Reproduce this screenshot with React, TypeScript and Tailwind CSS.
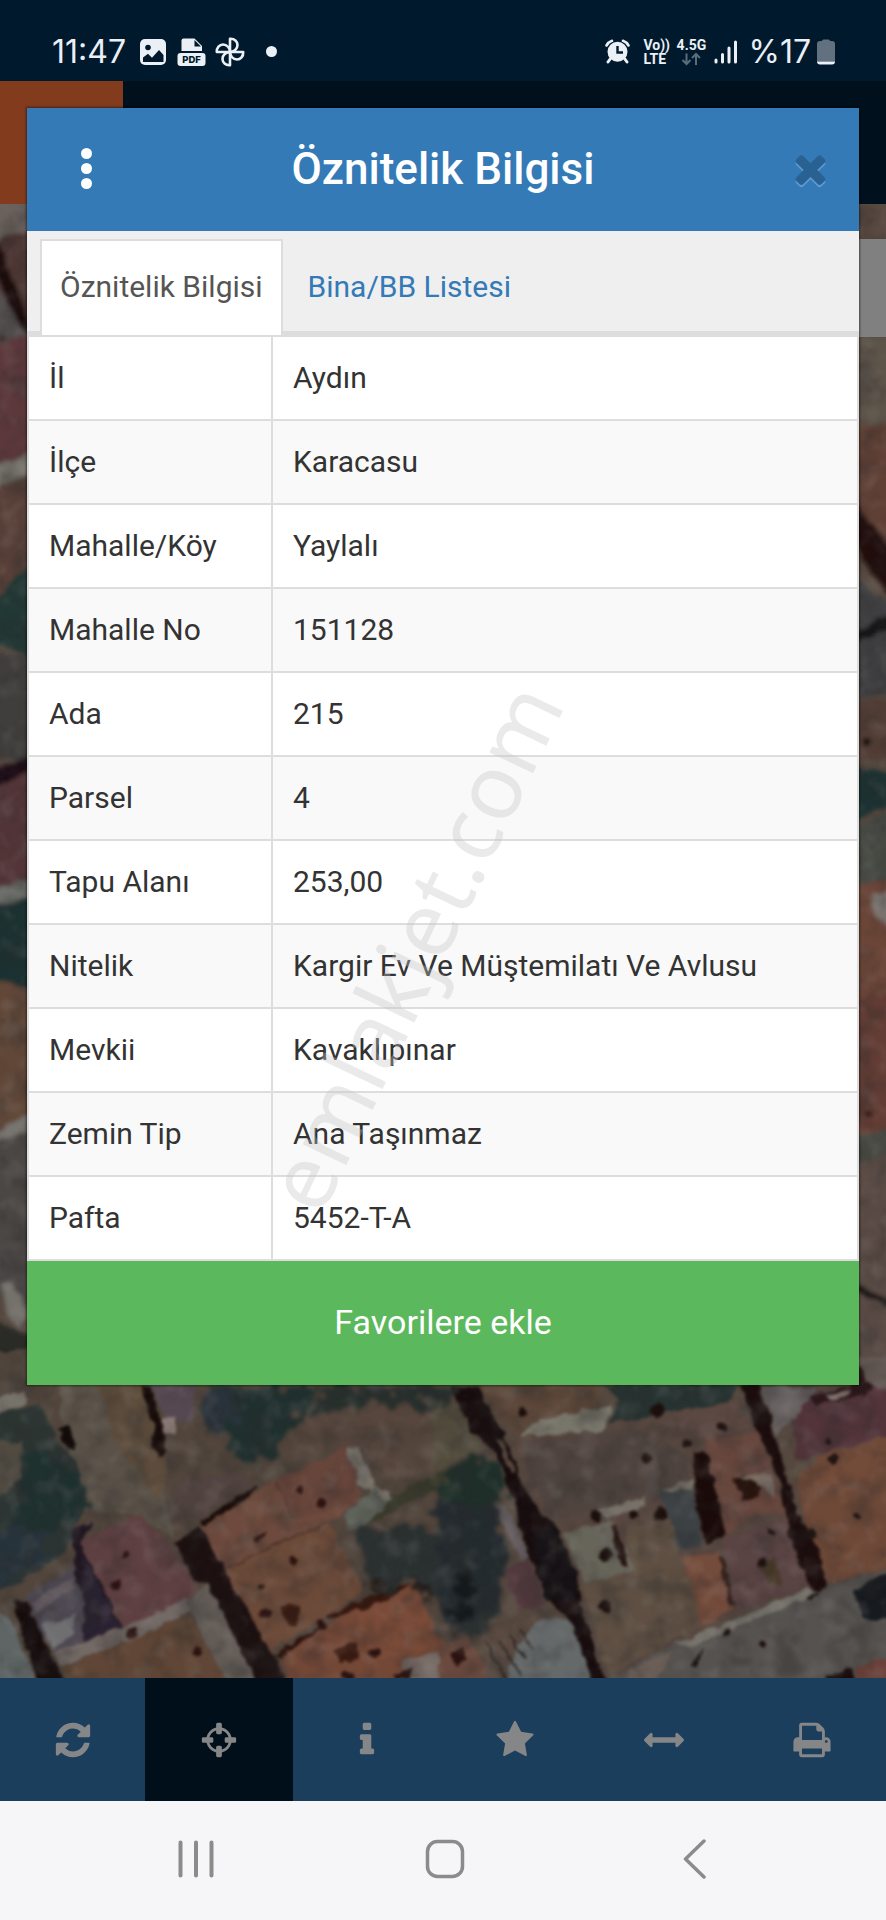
import React from "react";

const attributes: [string, string][] = [
  ["İl", "Aydın"],
  ["İlçe", "Karacasu"],
  ["Mahalle/Köy", "Yaylalı"],
  ["Mahalle No", "151128"],
  ["Ada", "215"],
  ["Parsel", "4"],
  ["Tapu Alanı", "253,00"],
  ["Nitelik", "Kargir Ev Ve Müştemilatı Ve Avlusu"],
  ["Mevkii", "Kavaklıpınar"],
  ["Zemin Tip", "Ana Taşınmaz"],
  ["Pafta", "5452-T-A"],
];

const tools = [
  {
    label: "Yenile",
    path: "M1639 1056q0 5-1 7-64 268-268 434.5t-478 166.5q-146 0-282.5-55t-243.5-157l-129 129q-19 19-45 19t-45-19-19-45v-448q0-26 19-45t45-19h448q26 0 45 19t19 45-19 45l-137 137q71 66 161 102t187 36q134 0 250-65t186-179q11-17 53-117 8-23 30-23h192q13 0 22.5 9.5t9.5 22.5zm25-800v448q0 26-19 45t-45 19h-448q-26 0-45-19t-19-45 19-45l138-138q-148-137-349-137-134 0-250 65t-186 179q-11 17-53 117-8 23-30 23h-199q-13 0-22.5-9.5t-9.5-22.5v-7q65-268 270-434.5t480-166.5q146 0 284 55.5t245 156.5l130-129q19-19 45-19t45 19 19 45z",
  },
  {
    label: "Konum",
    active: true,
    path: "M1325 1024h-109q-26 0-45-19t-19-45v-128q0-26 19-45t45-19h109q-32-108-112.5-188.5t-188.5-112.5v109q0 26-19 45t-45 19h-128q-26 0-45-19t-19-45v-109q-108 32-188.5 112.5t-112.5 188.5h109q26 0 45 19t19 45v128q0 26-19 45t-45 19h-109q32 108 112.5 188.5t188.5 112.5v-109q0-26 19-45t45-19h128q26 0 45 19t19 45v109q108-32 188.5-112.5t112.5-188.5zm339-192v128q0 26-19 45t-45 19h-143q-37 161-154.5 278.5t-278.5 154.5v143q0 26-19 45t-45 19h-128q-26 0-45-19t-19-45v-143q-161-37-278.5-154.5t-154.5-278.5h-143q-26 0-45-19t-19-45v-128q0-26 19-45t45-19h143q37-161 154.5-278.5t278.5-154.5v-143q0-26 19-45t45-19h128q26 0 45 19t19 45v143q161 37 278.5 154.5t154.5 278.5h143q26 0 45 19t19 45z",
  },
  {
    label: "Bilgi",
    path: "M1216 1344v128q0 26-19 45t-45 19h-512q-26 0-45-19t-19-45v-128q0-26 19-45t45-19h64v-384h-64q-26 0-45-19t-19-45v-128q0-26 19-45t45-19h384q26 0 45 19t19 45v576h64q26 0 45 19t19 45zm-128-1152v192q0 26-19 45t-45 19h-256q-26 0-45-19t-19-45v-192q0-26 19-45t45-19h256q26 0 45 19t19 45z",
  },
  {
    label: "Favoriler",
    path: "M1728 647q0 22-26 48l-363 354 86 500q1 7 1 20 0 21-10.5 35.5t-30.5 14.5q-19 0-40-12l-449-236-449 236q-22 12-40 12-21 0-31.5-14.5t-10.5-35.5q0-6 2-20l86-500-364-354q-25-27-25-48 0-37 56-46l502-73 225-455q19-41 49-41t49 41l225 455 502 73q56 9 56 46z",
  },
  {
    label: "Ölç",
    path: "M1792 896q0 26-19 45l-256 256q-19 19-45 19t-45-19-19-45v-128h-1024v128q0 26-19 45t-45 19-45-19l-256-256q-19-19-19-45t19-45l256-256q19-19 45-19t45 19 19 45v128h1024v-128q0-26 19-45t45-19 45 19l256 256q19 19 19 45z",
  },
  {
    label: "Yazdır",
    path: "M448 1536h896v-256h-896v256zm0-640h896v-384h-160q-40 0-68-28t-28-68v-160h-640v640zm1152 64q0-26-19-45t-45-19-45 19-19 45 19 45 45 19 45-19 19-45zm128 0v416q0 13-9.5 22.5t-22.5 9.5h-224v160q0 40-28 68t-68 28h-960q-40 0-68-28t-28-68v-160h-224q-13 0-22.5-9.5t-9.5-22.5v-416q0-79 56.5-135.5t135.5-56.5h64v-544q0-40 28-68t68-28h672q40 0 88 20t76 48l152 152q28 28 48 76t20 88v256h64q79 0 135.5 56.5t56.5 135.5z",
  },
];

const closePath =
  "M1490 1322q0 40-28 68l-136 136q-28 28-68 28t-68-28l-294-294-294 294q-28 28-68 28t-68-28l-136-136q-28-28-28-68t28-68l294-294-294-294q-28-28-28-68t28-68l136-136q28-28 68-28t68 28l294 294 294-294q28-28 68-28t68 28l136 136q28 28 28 68t-28 68l-294 294 294 294q28 28 28 68z";

function StatusBar() {
  return (
    <div className="flex h-[81px] items-center justify-between bg-[#00192c] pt-[23px] pr-[51px] pb-[1px] pl-[52px] font-['Inter',sans-serif] text-[#eaf0f6]">
      <div className="flex items-center">
        <span className="w-[88px] text-[32px] leading-8">11:47</span>
        <svg className="h-[26px] w-[26px]" viewBox="0 0 26 26">
          <rect width="26" height="26" rx="5" fill="currentColor" />
          <circle cx="8" cy="8.500" r="2.800" fill="#00192c" />
          <path d="M3 23v-4.500l5-3.800 4 4 7-7.700 4.500 5V23z" fill="#00192c" />
        </svg>
        <svg className="ml-[11px] h-[28px] w-[29px]" viewBox="0 0 29 28">
          <path d="M4.500 13V2.500Q4.500 .5 6.500 .5H17.500L25 8V13z" fill="currentColor" />
          <path d="M17.500 2v6.500H24z" fill="#00192c" />
          <rect x=".5" y="15" width="28" height="13" rx="3" fill="currentColor" />
          <text x="14.500" y="25" textAnchor="middle" fontSize="9.500" fontWeight="800" fill="#00192c">PDF</text>
        </svg>
        <svg className="ml-[9px] h-[30px] w-[30px]" viewBox="0 0 30 30" fill="none" stroke="currentColor" strokeWidth="2.600" strokeLinejoin="round">
          <path d="M15 15V1.800C19.500 1.500 22.500 4.500 22.500 8 22.500 12 19 15 15 15Z" />
          <path d="M15 15V1.800C19.500 1.500 22.500 4.500 22.500 8 22.500 12 19 15 15 15Z" transform="rotate(90 15 15)" />
          <path d="M15 15V1.800C19.500 1.500 22.500 4.500 22.500 8 22.500 12 19 15 15 15Z" transform="rotate(180 15 15)" />
          <path d="M15 15V1.800C19.500 1.500 22.500 4.500 22.500 8 22.500 12 19 15 15 15Z" transform="rotate(270 15 15)" />
        </svg>
        <span className="ml-[21px] h-[11px] w-[11px] rounded-full bg-[#eaf0f6]" />
      </div>
      <div className="flex items-center">
        <svg className="h-[25px] w-[25px]" viewBox="0 0 25 25" fill="none">
          <circle cx="12.500" cy="12.800" r="10" fill="currentColor" />
          <path d="M1.500 6.500Q3.500 3 7 1.800M23.500 6.500Q21.500 3 18 1.800" stroke="currentColor" strokeWidth="2.600" strokeLinecap="round" />
          <path d="M5.500 19.500 3 23M19.500 19.500 22 23" stroke="currentColor" strokeWidth="3" strokeLinecap="round" />
          <path d="M12.500 7v6.500H18" stroke="#00192c" strokeWidth="2.400" />
        </svg>
        <span className="ml-[13px] flex w-[33px] flex-col font-['Roboto',sans-serif] text-[14px] leading-[14px] font-bold">
          <span>Vo))</span>
          <span>LTE</span>
        </span>
        <span className="flex w-[30px] flex-col items-center font-['Roboto',sans-serif] text-[14px] leading-[14px] font-bold">
          <span>4.5G</span>
          <svg className="h-[14px] w-[20px]" viewBox="0 0 20 14" fill="none" stroke="#5b6d7c" strokeWidth="2">
            <path d="M5.500 1.500v10M1.500 8l4 4 4-4M15 13V2.500M11 6l4-4 4 4" />
          </svg>
        </span>
        <svg className="ml-[8px] h-[24px] w-[24px]" viewBox="0 0 24 24" stroke="currentColor" strokeWidth="3" strokeLinecap="round">
          <path d="M2 20v2M8.500 14.500V22M15 8v14M21.500 2v20" />
        </svg>
        <span className="ml-[10px] text-[32px] leading-8">%17</span>
        <svg className="ml-[6px] h-[26px] w-[18px]" viewBox="0 0 18 26">
          <path d="M5 2Q5 .5 6.500 .5h5Q13 .5 13 2h2q3 0 3 3v17.500H0V5q0-3 3-3z" fill="#61717f" />
          <path d="M0 22.500h18q0 3-3 3H3q-3 0-3-3z" fill="currentColor" />
        </svg>
      </div>
    </div>
  );
}

function SatelliteMap() {
  return (
    <svg
      className="absolute inset-0 h-full w-full"
      viewBox="0 204 886 1474"
      preserveAspectRatio="xMidYMid slice"
      role="img"
      aria-label="Uydu haritası"
    >
      <defs>
        <filter id="terrain" x="-5%" y="-5%" width="110%" height="110%">
          <feTurbulence type="fractalNoise" baseFrequency="0.07" numOctaves="3" seed="4" result="n" />
          <feDisplacementMap in="SourceGraphic" in2="n" scale="8" xChannelSelector="R" yChannelSelector="G" result="d" />
          <feGaussianBlur in="d" stdDeviation="2" />
        </filter>
        <filter id="blocks" x="-5%" y="-5%" width="110%" height="110%" colorInterpolationFilters="sRGB">
          <feTurbulence type="fractalNoise" baseFrequency="0.025" numOctaves="3" seed="4" result="n" />
          <feDisplacementMap in="SourceGraphic" in2="n" scale="26" xChannelSelector="R" yChannelSelector="G" result="d" />
          <feGaussianBlur in="d" stdDeviation="5" />
        </filter>
        <filter id="leaves" x="-10%" y="-10%" width="120%" height="120%" colorInterpolationFilters="sRGB">
          <feTurbulence type="fractalNoise" baseFrequency="0.02" numOctaves="4" seed="23" result="n" />
          <feDisplacementMap in="SourceGraphic" in2="n" scale="90" xChannelSelector="R" yChannelSelector="G" result="d" />
          <feGaussianBlur in="d" stdDeviation="7" />
        </filter>
        <filter id="shade" x="0" y="0" width="100%" height="100%">
          <feTurbulence type="fractalNoise" baseFrequency="0.04" numOctaves="5" seed="11" />
          <feColorMatrix values="0 0 0 0 0.02  0 0 0 0 0.02  0 0 0 0 0.02  3 0 0 0 -1.300" />
          <feGaussianBlur stdDeviation="1.500" />
        </filter>
        <filter id="glint" x="0" y="0" width="100%" height="100%">
          <feTurbulence type="fractalNoise" baseFrequency="0.05" numOctaves="4" seed="31" />
          <feColorMatrix values="0 0 0 0 0.5  0 0 0 0 0.48  0 0 0 0 0.45  0 3 0 0 -1.500" />
          <feGaussianBlur stdDeviation="1.500" />
        </filter>
      </defs>
      <rect y="204" width="886" height="1474" fill="#55483f" />

      {/* western edge */}
      <g filter="url(#terrain)">
        <path d="M-10 200H40V240L-10 252z" fill="#6b615b" />
        <path d="M-10 244 40 225V340H-10z" fill="#4c3533" />
        <path d="M-10 242 0 242 34 335V358L-10 262z" fill="#1c0c0d" />
        <path d="M-10 275 20 325 40 345 10 340-10 330z" fill="#55504f" />
        <path d="M-10 345 30 335 40 455-10 475z" fill="#5b393b" />
        <path d="M-10 470 40 448V472L-10 490z" fill="#77736c" />
        <path d="M-10 488 40 476V560L20 580-10 600z" fill="#594139" />
        <path d="M-10 608 14 578 40 560V662L10 650-10 640z" fill="#233834" />
        <path d="M-10 650 40 660V760H-10z" fill="#3f3c3c" />
        <path d="M-10 772 40 752V768L-10 792z" fill="#1e1112" />
        <path d="M-10 790 40 766V890L-10 900z" fill="#533537" />
        <path d="M-10 890 40 878V905L-10 915z" fill="#6d706b" />
        <path d="M-10 908 40 896V990L-10 980z" fill="#1e3130" />
        <path d="M-10 984Q12 972 40 1010V1120L-10 1130z" fill="#614739" />
        <path d="M-10 1135 40 1108V1128L-10 1145z" fill="#77756f" />
        <path d="M-10 1143 40 1125V1310L-10 1290z" fill="#4b4644" />
        <path d="M0 1285 12 1283 28 1312 20 1330 8 1318z" fill="#73716b" />
        <path d="M-10 1320 40 1338V1380H-10z" fill="#2b2b27" />
      </g>

      {/* eastern edge */}
      <g filter="url(#terrain)">
        <path d="M850 200H900V240H850z" fill="#5a4a40" />
        <path d="M850 336H900V425L850 420z" fill="#5c5249" />
        <path d="M850 430 900 420V560L850 530z" fill="#603f36" />
        <path d="M850 495 900 560V610L862 560 850 525z" fill="#230e0e" />
        <path d="M850 575 900 610V690L850 700z" fill="#403f42" />
        <path d="M850 634 900 610V625L850 645z" fill="#191719" />
        <path d="M850 700H900V760H850z" fill="#513c34" />
        <circle cx="867" cy="742" r="4" fill="#170c0a" />
        <path d="M850 765 900 775V800L850 822z" fill="#1f3030" />
        <path d="M850 828 900 808V885L850 880z" fill="#444a43" />
        <path d="M850 885 900 880V1130L850 1135z" fill="#6a4438" />
        <path d="M872 893 900 890V935L875 915z" fill="#79736e" />
        <path d="M850 1000 900 990V1130H850z" fill="#643e35" />
        <circle cx="869" cy="1114" r="4" fill="#2b1513" />
        <path d="M850 1140 900 1125V1155L850 1168z" fill="#464a43" />
        <path d="M850 1165 900 1150V1390H850z" fill="#5a4c44" />
        <path d="M850 1280 900 1305V1312L850 1290z" fill="#1b1513" />
        <path d="M850 1345 872 1375 860 1392H850z" fill="#2a1719" />
      </g>

      {/* southern blocks, left half */}
      <g transform="translate(0 1370) scale(.3333)" filter="url(#blocks)">
        <path d="M-60-60H1400V1000H-60z" fill="#51453c" />
        <path d="M170 40H430L470 250 520 500 400 430 240 420z" fill="#5a5248" />
        <path d="M290 40H430L500 300 480 400 360 240z" fill="#5d4c3c" />
        <path d="M-20 90 75 60 80 95-20 145z" fill="#76736b" />
        <path d="M-60 140 120 100 155 180 230 280 260 400 210 520 150 580 60 640-60 690z" fill="#2d3634" />
        <path d="M-60 200 70 220 60 330-60 420z" fill="#504a41" />
        <path d="M170 175 205 168 228 240 205 238z" fill="#120b09" />
        <path d="M420 45 455 55 482 150 505 240 480 262 455 235 460 160z" fill="#170b09" />
        <path d="M455 45 590 50 570 150 500 160z" fill="#564851" />
        <path d="M485 145 525 145 525 190 490 190z" fill="#8b7c77" />
        <path d="M520 340 720 300 760 350 600 440 520 480z" fill="#51433f" />
        <path d="M1340 90 900 150 800 270 1020 230 1100 250 1180 330 1340 290z" fill="#56463d" />
        <path d="M1170 380 1340 300V340L1090 470 1060 450z" fill="#3a3b2c" />
        <path d="M600 460 830 330 1040 232 1085 380 990 455 1090 670 800 850 720 760z" fill="#6d4a3d" />
        <path d="M680 590 990 455 1095 665 800 850z" fill="#6b4a39" />
        <path d="M830 330 1040 232 1080 395 880 450z" fill="#67453b" />
        <path d="M830 860 1100 690 1240 640 1340 840 1240 900 1130 1000H900z" fill="#744837" />
        <path d="M1060 720 1240 645 1325 830 1120 870z" fill="#7a4b38" />
        <path d="M600 452 770 345 750 380 605 470z" fill="#180b08" />
        <path d="M520 515 598 468 668 590 820 855 890 1000H790L620 640 590 635z" fill="#1c1010" />
        <path d="M820 855 980 755 940 790 840 868z" fill="#2b120d" />
        <path d="M980 740 1130 668 1230 640 1160 690 1000 748z" fill="#35180f" />
        <path d="M680 592 860 508 990 458" fill="none" stroke="#50352b" strokeWidth="6" />
        <path d="M830 335 880 445" fill="none" stroke="#573a30" strokeWidth="6" />
        <path d="M1040 235 1075 230 1130 350 1170 370 1180 390 1140 410 1110 360 1080 350z" fill="#7a746b" />
        <path d="M1030 430 1130 350 1160 400 1080 480 1040 480z" fill="#5a5e55" />
        <path d="M1200 870 1340 840V1000H1250z" fill="#776b66" />
        <path d="M230 520 420 430 520 545 590 640 580 690 370 780z" fill="#5f4042" />
        <path d="M215 480 280 455 240 520 370 775 260 850 230 640z" fill="#1f1520" />
        <path d="M250 560 365 775 260 840 240 690z" fill="#292130" />
        <path d="M75 680 220 590 250 690 250 810 180 870 120 780z" fill="#4e4852" />
        <path d="M90 700 215 625 230 650 105 730z" fill="#655c62" />
        <path d="M130 765 230 730 225 790 160 840z" fill="#6f6f72" />
        <path d="M160 850 370 770 570 685 580 715 400 810 180 890z" fill="#736965" />
        <path d="M35 690 80 700 190 930 220 1000H130z" fill="#160c0c" />
        <path d="M-60 700 30 740 130 1000H-60z" fill="#5f6565" />
        <path d="M190 890 400 805 560 735 650 860 690 1000H230z" fill="#604636" />
        <path d="M560 700 620 640 740 870 800 1000H710z" fill="#625b56" />
        <path d="M1000 840 1070 810 1075 865 1020 880zM840 710 900 705 895 770 860 765z" fill="#38190f" />
        <g fill="#2c120f">
          <circle cx="350" cy="648" r="15" /><circle cx="380" cy="558" r="11" />
          <circle cx="880" cy="572" r="14" /><circle cx="798" cy="730" r="13" />
          <circle cx="1124" cy="852" r="15" /><circle cx="963" cy="398" r="11" />
          <circle cx="895" cy="358" r="10" /><circle cx="1045" cy="918" r="16" />
          <circle cx="592" cy="845" r="14" /><circle cx="394" cy="790" r="15" />
          <circle cx="785" cy="650" r="9" /><circle cx="965" cy="765" r="14" />
          <path d="M760 505 800 485 795 500 768 518zM1180 915 1240 890 1225 920 1190 935z" />
        </g>
      </g>

      {/* southern blocks, right half */}
      <g transform="translate(443 1370) scale(.3333)" filter="url(#blocks)">
        <path d="M100 40H480L470 100 240 210 180 150z" fill="#5b4639" />
        <path d="M-30 60 60 130 120 240-30 300z" fill="#524c3d" />
        <path d="M210 215 700 120 900 100 950 190 1040 520 1140 650 650 840 500 920 420 700 380 490 290 430z" fill="#56463f" />
        <path d="M240 220 560 170 720 240 740 330 640 390 330 450 260 330z" fill="#50443f" />
        <path d="M230 200 290 150 420 120 510 110 480 180 380 190z" fill="#78756a" />
        <path d="M480 45H890L850 110 700 120 600 140 500 160 530 90z" fill="#273331" />
        <path d="M700 130 880 90 930 170 820 200 720 200z" fill="#5c4842" />
        <path d="M790 205 950 190 1030 430 930 430 850 500 800 330z" fill="#66463d" />
        <path d="M840 510 1030 440 1120 640 880 720z" fill="#5a4343" />
        <path d="M715 560 830 545 875 715 780 770z" fill="#744c3c" />
        <path d="M550 470 680 450 780 770 650 830 500 915 410 640 560 600z" fill="#5e4f42" />
        <path d="M360 490 500 450 580 600 430 640z" fill="#67645a" />
        <path d="M650 360 750 340 780 520 710 540z" fill="#3e4346" />
        <path d="M750 250 790 240 850 500 790 525 760 420z" fill="#1a0b0a" />
        <path d="M870 330 900 310 950 340 950 375 905 390z" fill="#28130d" />
        <path d="M890 315 980 310 1000 380 940 340z" fill="#786c63" />
        <path d="M950 590 1000 560 1015 640 975 645z" fill="#493a29" />
        <path d="M500 470 520 470 560 595 535 590z" fill="#24120e" />
        <path d="M825 560 840 560 880 710 865 710z" fill="#35211d" />
        <path d="M460 420 600 380 610 410 490 445zM660 360 750 330 750 350 680 370z" fill="#777168" />
        <path d="M950 50 1120 50 1110 120 1040 150 1000 200z" fill="#676160" />
        <path d="M1110 70 1260 45 1380 40V190L1060 270 1050 150z" fill="#52343a" />
        <path d="M1100 80 1290 30 1290 65 1120 110z" fill="#2b1518" />
        <path d="M1150 75 1220 60 1220 75 1160 95z" fill="#83736f" />
        <path d="M1230-40 1400-40V100L1280 40z" fill="#625753" />
        <path d="M1060 310 1170 240 1400 180V580L1150 640 1090 490z" fill="#6e4938" />
        <path d="M1330 230 1270 380 1080 320z" fill="#734b39" />
        <path d="M890 40H945L1020 280 1065 430 1120 530 1155 655 1110 660 1040 510 1010 330 940 170z" fill="#1c0d0d" />
        <path d="M20 50H105L190 210 250 370 340 480 405 610 410 700 510 1000H465L380 740 310 690 250 530 200 370 160 250 90 190z" fill="#180d0e" />
        <path d="M265 490 330 470 400 600 400 690 310 690z" fill="#161114" />
        <path d="M165 200 185 210 215 310 200 305z" fill="#55463d" />
        <path d="M155 410 185 395 260 560 240 590z" fill="#625a5d" />
        <path d="M180 600 260 570 310 710 230 720z" fill="#52393d" />
        <path d="M90 790 280 740 300 800 150 870z" fill="#5a4a41" />
        <path d="M210 850 290 740 380 745 470 1000H170z" fill="#656969" />
        <path d="M-10 830 70 795 130 890V1000H-10z" fill="#6a493e" />
        <path d="M20 850 60 830 70 870 40 890z" fill="#2b120e" />
        <path d="M500 925 700 820 1000 700 1240 625 1400 580V1000H500z" fill="#56524f" />
        <path d="M700 820 1100 655 1120 675 880 770 740 830z" fill="#77746c" />
        <path d="M560 900 690 840 600 1000H500z" fill="#6a5e57" />
        <path d="M1230 660 1400 570V750L1260 745z" fill="#171a1f" />
        <path d="M1150 920 1220 890 1270 1000H1140z" fill="#1b0c0b" />
        <path d="M1240 890 1400 840V1000H1240z" fill="#6a4038" />
        <path d="M745 885 785 835 775 860 755 895zM1095 685 1135 655 1110 690z" fill="#1c1412" />
        <g stroke="#2c2523" strokeWidth="6">
          <path d="M130 820 190 930M165 810 235 915M200 795 250 870M235 780 270 840" />
        </g>
        <g fill="#1c0f0c">
          <circle cx="238" cy="128" r="14" /><circle cx="610" cy="265" r="14" />
          <circle cx="458" cy="437" r="15" /><circle cx="573" cy="432" r="14" />
          <circle cx="652" cy="432" r="20" /><circle cx="490" cy="558" r="21" />
          <circle cx="487" cy="708" r="16" /><circle cx="838" cy="172" r="14" />
          <circle cx="734" cy="222" r="12" /><circle cx="1170" cy="267" r="14" />
          <circle cx="1157" cy="213" r="10" /><circle cx="1243" cy="437" r="13" />
          <circle cx="958" cy="575" r="13" /><circle cx="985" cy="490" r="10" />
          <circle cx="962" cy="822" r="13" /><circle cx="850" cy="785" r="12" />
          <circle cx="1105" cy="495" r="15" /><circle cx="645" cy="120" r="20" />
        </g>
      </g>

      {/* tree canopies */}
      <g transform="translate(0 1370) scale(.3333)" filter="url(#leaves)">
        <path d="M630 50H940L925 130 860 190 800 270 710 265 680 190 615 170z" fill="#20302e" />
        <path d="M630 60 700 70 710 150 640 180 610 130z" fill="#2a333c" />
        <path d="M940 50H1350V110L1150 100 950 130z" fill="#272f2c" />
        <path d="M80 240 150 250 250 330 260 400 200 460 100 500 20 480 70 390z" fill="#1f312f" />
        <path d="M-60 480 130 470 150 560 60 620-60 660z" fill="#27333b" />
        <path d="M1110 640 1250 620 1330 680 1300 700 1230 640 1110 665z" fill="#1c1410" />
        <path d="M1060 480 1200 470 1400 500 1500 560 1500 720 1420 820 1330 700 1250 640 1120 650 1090 600z" fill="#2b3131" />
        <path d="M1329 300 1459 250 1519 310 1519 380 1479 410 1320 420z" fill="#1f2f29" />
        <path d="M1310 390 1479 410 1519 560 1499 680 1389 760 1340 790z" fill="#242b2f" />
        <path d="M1360 620 1410 600 1430 700 1370 780z" fill="#14191c" />
      </g>
      <rect y="204" width="886" height="1474" filter="url(#shade)" opacity=".3" />
      <rect y="204" width="886" height="1474" filter="url(#glint)" opacity=".12" />
    </svg>
  );
}

function AttributeDialog() {
  return (
    <section
      role="dialog"
      aria-labelledby="dialog-title"
      className="absolute inset-x-[27px] top-[108px] bg-white shadow-[0_0_2px_1px_rgba(0,0,0,0.45)]"
    >
      <header className="flex h-[123px] items-center bg-[#337ab7] pr-[29px] pb-[2px] pl-[39px]">
        <button aria-label="Menü" className="flex h-10 w-10 flex-col items-center justify-center gap-1">
          <span className="h-[11px] w-[11px] shrink-0 rounded-full bg-white" />
          <span className="h-[11px] w-[11px] shrink-0 rounded-full bg-white" />
          <span className="h-[11px] w-[11px] shrink-0 rounded-full bg-white" />
        </button>
        <h1 id="dialog-title" className="flex-1 pr-[10px] text-center text-[44px] leading-[52px] font-medium text-white">
          Öznitelik Bilgisi
        </h1>
        <button aria-label="Kapat" className="flex h-10 w-10 items-center justify-center">
          <svg className="h-[45px] w-[45px] shrink-0" viewBox="0 0 1792 1792">
            <path d={closePath} fill="#5f9bd0" transform="translate(0 90)" />
            <path d={closePath} fill="#296292" />
          </svg>
        </button>
      </header>
      <div role="tablist" className="flex h-[104px] items-end gap-[5px] border-b-4 border-[#ddd] bg-[#efefef] pl-[13px]">
        <button
          role="tab"
          aria-selected="true"
          className="-mb-1 h-24 border-2 border-b-0 border-[#ddd] bg-white px-[18px] pb-1 text-[30px] text-[#555]"
        >
          Öznitelik Bilgisi
        </button>
        <button
          role="tab"
          aria-selected="false"
          className="-mb-1 h-24 border-2 border-b-0 border-transparent px-[18px] pb-1 text-[30px] text-[#337ab7]"
        >
          Bina/BB Listesi
        </button>
      </div>
      <table className="w-full border-collapse text-left text-[30px] leading-9 text-[#333]">
        <tbody>
          {attributes.map(([name, value]) => (
            <tr key={name} className="h-[84px] odd:bg-white even:bg-[#f9f9f9]">
              <th scope="row" className="w-[244px] border-2 border-[#ddd] px-5 font-normal">
                {name}
              </th>
              <td className="border-2 border-[#ddd] px-5">{value}</td>
            </tr>
          ))}
        </tbody>
      </table>
      <button className="h-[124px] w-full bg-[#5cb85c] pb-[2px] text-[34px] text-white">Favorilere ekle</button>
      <span className="pointer-events-none absolute top-[838px] left-[385px] -translate-x-1/2 -translate-y-1/2 -rotate-[64.5deg] font-['Noto_Sans',sans-serif] text-[90px] leading-none whitespace-nowrap text-[#c4c4c4] opacity-35">
        emlakjet.com
      </span>
    </section>
  );
}

function Toolbar() {
  return (
    <nav className="grid h-[123px] grid-cols-[145px_repeat(5,1fr)] bg-[#1b3e5c]">
      {tools.map((tool) => (
        <button
          key={tool.label}
          aria-label={tool.label}
          className={
            tool.active
              ? "flex items-center justify-center bg-[#000f1a]"
              : "flex items-center justify-center"
          }
        >
          <svg className="h-10 w-10" viewBox="0 0 1792 1792" fill="#858687">
            <path d={tool.path} />
          </svg>
        </button>
      ))}
    </nav>
  );
}

function SystemNav() {
  return (
    <nav className="flex h-[119px] items-center justify-around bg-[#f6f6f9] pr-[68px] pb-1 pl-[72px] text-[#8b8b8b]">
      <button aria-label="Son uygulamalar">
        <svg className="h-10 w-10" viewBox="0 0 40 40" fill="none" stroke="currentColor" strokeWidth="4" strokeLinecap="round">
          <path d="M4.500 3.500v33M20 3.500v33M35.500 3.500v33" />
        </svg>
      </button>
      <button aria-label="Ana ekran">
        <svg className="h-10 w-10" viewBox="0 0 40 40" fill="none" stroke="currentColor" strokeWidth="3.500">
          <rect x="2.500" y="2.500" width="35" height="35" rx="10" />
        </svg>
      </button>
      <button aria-label="Geri">
        <svg className="h-10 w-10" viewBox="0 0 40 40" fill="none" stroke="currentColor" strokeWidth="3.500" strokeLinecap="round" strokeLinejoin="round">
          <path d="M30 2 11.500 20 30 38" />
        </svg>
      </button>
    </nav>
  );
}

export default function App() {
  return (
    <div className="relative flex min-h-screen flex-col font-['Roboto',sans-serif]">
      <StatusBar />
      <div className="h-[123px] bg-[#00101c]">
        <div className="h-full w-[123px] bg-[#823b1d]" />
      </div>
      <main className="relative min-h-[1300px] flex-1 overflow-hidden bg-[#55483f]">
        <SatelliteMap />
        <div className="absolute top-[35px] right-0 h-[98px] w-16 bg-[#808080]" />
      </main>
      <Toolbar />
      <SystemNav />
      <AttributeDialog />
    </div>
  );
}
